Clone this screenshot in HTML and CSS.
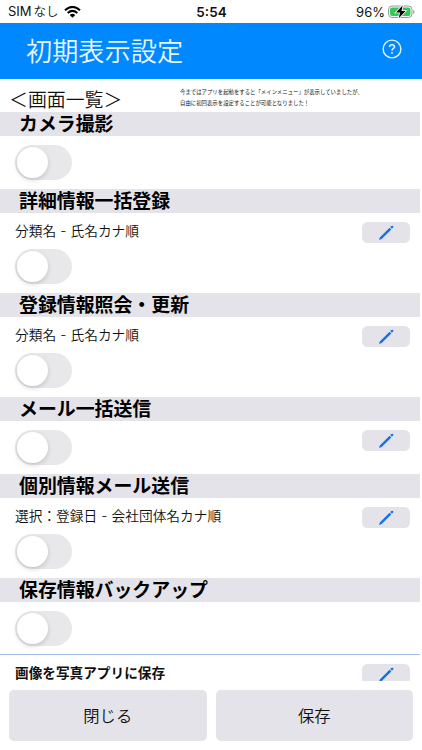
FILE: index.html
```html
<!DOCTYPE html>
<html lang="ja">
<head>
<meta charset="utf-8">
<title>初期表示設定</title>
<link rel="stylesheet" href="styles.css">
</head>
<body>
<svg class="defs" width="0" height="0"><symbol id="pencil" viewBox="0 0 16 16"><path d="M2 12.200 11.500 2.800 13.300 4.400 3.700 14 .9 15.100zM12.200 2.100 13.400 1Q14.400.4 15.100 1T15.100 2.600L13.900 3.700z"/></symbol></svg>
<div class="status">
  <div class="carrier"><span>SIM<span class="kana">なし</span></span>
    <svg class="wifi" viewBox="0 0 17 12"><path d="M1 4.200Q8.500-2.400 16 4.200M3.700 7Q8.500 2.800 13.300 7" fill="none" stroke="#000" stroke-width="2.100"/><path d="M5.700 8.900Q8.500 6.500 11.300 8.900L8.500 11.800z"/></svg>
  </div>
  <div class="time">5:54</div>
  <div class="power"><span>96%</span>
    <svg class="battery" viewBox="0 0 27 14"><rect x=".5" y="1" width="23.500" height="11.500" rx="3.500" fill="#fff" stroke="#999"/><rect x="2" y="2.500" width="20.500" height="8.500" rx="2" fill="#34c759"/><path d="M25.200 5v4q1.300-.5 1.300-2T25.200 5z" fill="#999"/><path d="M14.600.5 8 7.400h4l-1.200 5.900 6.700-7.200h-4z" stroke="#fff" stroke-width="1.600" paint-order="stroke"/></svg>
  </div>
</div>
<header class="navbar">
  <h1>初期表示設定</h1>
  <svg class="help" viewBox="0 0 20 20" fill="none" stroke="#e8f6ff"><circle cx="10" cy="10" r="8.900" stroke-width="1.400"/><path d="M7.500 8Q7.600 5.800 10 5.800T12.500 7.900C12.500 9.500 10 9.500 10 11.700" stroke-width="1.500"/><path d="M10 13.100v1.600" stroke-width="1.600"/></svg>
</header>
<main class="content">
  <div class="intro">
    <h2>＜画面一覧＞</h2>
    <p>今まではアプリを起動をすると「メインメニュー」が表示していましたが、<br>自由に初回表示を設定することが可能となりました！</p>
  </div>
  <section><h3>カメラ撮影</h3><div class="row"><span class="toggle"></span></div></section>
  <section><h3>詳細情報一括登録</h3><div class="row"><div><p class="order">分類名 - 氏名カナ順</p><span class="toggle"></span></div><button class="edit"><svg><use href="#pencil"/></svg></button></div></section>
  <section><h3>登録情報照会・更新</h3><div class="row"><div><p class="order">分類名 - 氏名カナ順</p><span class="toggle"></span></div><button class="edit"><svg><use href="#pencil"/></svg></button></div></section>
  <section><h3>メール一括送信</h3><div class="row"><span class="toggle"></span><button class="edit"><svg><use href="#pencil"/></svg></button></div></section>
  <section><h3>個別情報メール送信</h3><div class="row"><div><p class="order">選択：登録日 - 会社団体名カナ順</p><span class="toggle"></span></div><button class="edit"><svg><use href="#pencil"/></svg></button></div></section>
  <section><h3>保存情報バックアップ</h3><div class="row last"><span class="toggle"></span></div></section>
  <div class="row photo"><p class="order">画像を写真アプリに保存</p><button class="edit"><svg><use href="#pencil"/></svg></button></div>
</main>
<footer class="actions"><button>閉じる</button><button>保存</button></footer>
</body>
</html>
```
FILE: styles.css
```css
* { box-sizing: border-box; }
body {
  margin: 0;
  height: 750px;
  display: flex;
  flex-direction: column;
  overflow: hidden;
  background: #fff;
  color: #111;
  font-family: Inter, "Noto Sans CJK JP", sans-serif;
}
h1, h2, h3, p { margin: 0; }
button { border: 0; padding: 0; background: #e4e3e9; color: #111; font-family: inherit; }
.defs { position: absolute; }
.status {
  height: 23px;
  flex: none;
  display: grid;
  grid-template-columns: 1fr auto 1fr;
  align-items: center;
  padding: 0 7px 0 8px;
  font-size: 13px;
  line-height: 22px;
}
.carrier, .power { display: flex; align-items: center; }
.kana { font-weight: 350; font-size: 12.5px; margin-left: 2px; }
.wifi { width: 17px; height: 12px; margin-left: 5px; }
.time { font-weight: 600; font-size: 13.5px; }
.power { justify-content: flex-end; gap: 3px; }
.battery { width: 27px; height: 14px; }
.navbar {
  height: 56px;
  flex: none;
  display: flex;
  align-items: center;
  justify-content: space-between;
  padding: 0 20px 0 26px;
  background: #0088ff;
  color: #e8f6ff;
}
.navbar h1 { padding-top: 2px; font-size: 26.2px; font-weight: 350; line-height: 54px; }
.help { width: 20px; height: 20px; margin-top: -4px; }
.content { height: 602px; flex: none; overflow: hidden; padding-right: 2.5px; }
.intro { height: 33px; display: flex; padding-left: 9px; }
.intro h2 { width: 171px; font-size: 18.900px; font-weight: 350; line-height: 44px; white-space: nowrap; }
.intro p { padding-top: 8px; font-size: 5.4px; line-height: 11px; white-space: nowrap; }
h3 {
  height: 24px;
  padding-left: 19px;
  background: #e4e3e9;
  color: #000;
  font-size: 18.900px;
  font-weight: 700;
  line-height: 26px;
}
.row {
  display: flex;
  justify-content: space-between;
  align-items: flex-start;
  padding: 9px 9.500px 9px 15px;
}
.row.last { padding-bottom: 8px; }
.order { height: 27px; font-size: 13.700px; font-weight: 350; line-height: 18px; word-spacing: .3px; white-space: nowrap; }
.toggle {
  display: block;
  width: 57px;
  height: 35px;
  padding: 2px;
  border-radius: 18px;
  background: #e8e8ea;
}
.toggle::before {
  content: "";
  display: block;
  width: 31px;
  height: 31px;
  border-radius: 50%;
  background: #fff;
  box-shadow: 0 2px 5px rgba(0, 0, 0, .16);
}
.edit { width: 48.500px; height: 21px; border-radius: 5.500px; display: flex; align-items: center; justify-content: center; }
.edit svg { width: 16px; height: 16px; fill: #1272ea; }
.photo { border-top: 1px solid #9dbbef; }
.photo .order { font-size: 13.650px; font-weight: 700; }
.actions {
  flex: 1;
  display: grid;
  grid-template-columns: 1fr 1fr;
  gap: 9px;
  padding: 9px 9px 9px;
}
.actions button { height: 51px; padding-bottom: 2px; border-radius: 5px; font-size: 16.300px; font-weight: 350; }
```
